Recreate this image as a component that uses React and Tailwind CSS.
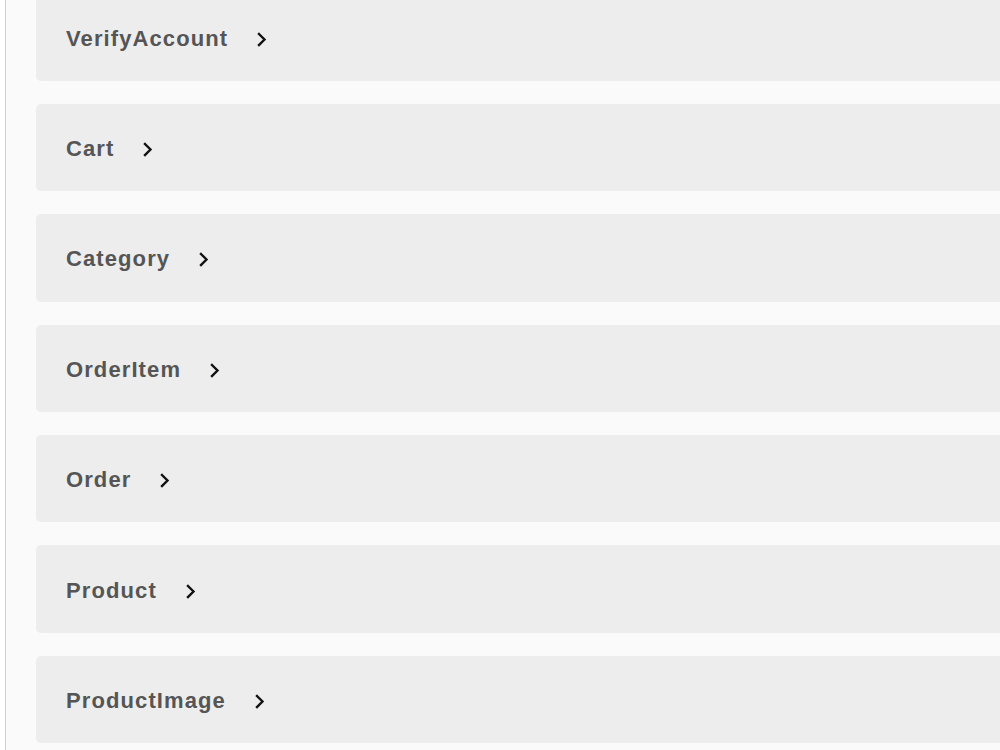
export default function App() {
  const items = ["VerifyAccount", "Cart", "Category", "OrderItem", "Order", "Product", "ProductImage"];
  return (
    <div className="flex h-[750px] w-[1000px] overflow-hidden bg-white" style={{ fontFamily: '"Liberation Sans", Arial, sans-serif' }}>
      <div className="w-[6px] shrink-0 border-r border-[#cfcfcf]"></div>
      <div className="flex-1 bg-[#fafafa] pl-[30px]">
        <div className="mt-[-6.6px] flex flex-col gap-[23px]">
          {items.map((name) => (
            <div key={name} className="flex h-[87.4px] items-center rounded-l-[5px] bg-[#ededed] pl-[30px] pt-[2px]">
              <span className="text-[22px] font-bold tracking-[1.1px] text-[#555555]">{name}</span>
              <svg className="ml-[29px] mt-[2px]" width="10" height="15" viewBox="0 0 10 15" fill="none">
                <path d="M2 2 L7.5 7.5 L2 13" stroke="#111" strokeWidth="2.4" strokeLinecap="square" />
              </svg>
            </div>
          ))}
        </div>
      </div>
    </div>
  );
}
